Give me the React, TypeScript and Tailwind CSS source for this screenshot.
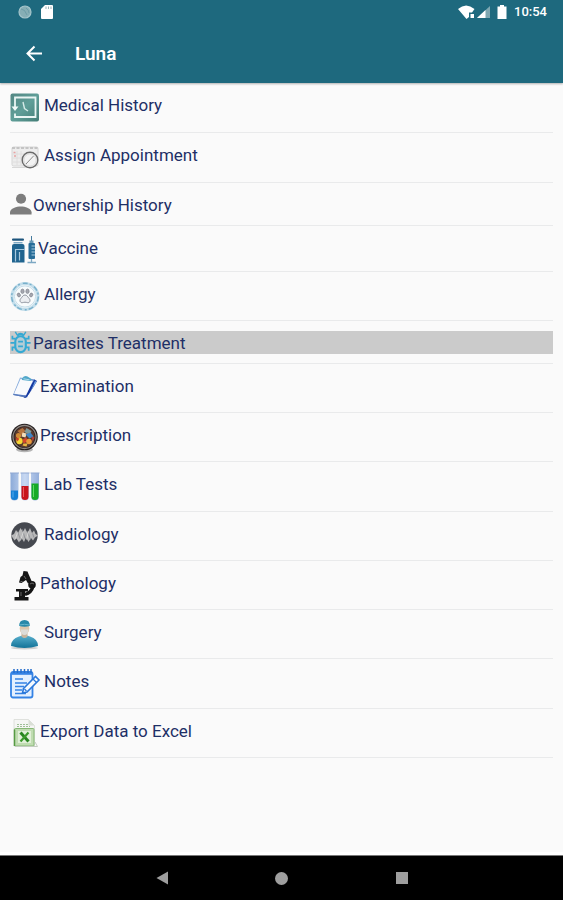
import type { ReactNode } from 'react';
import { clsx } from 'clsx';

function HistoryIcon() {
  return (
    <svg viewBox="0 0 30 30" className="size-[30px]">
      <defs>
        <linearGradient id="history-bg" x1="0" y1="0" x2="1" y2="1">
          <stop offset="0" stopColor="#538783" />
          <stop offset="0.5" stopColor="#5f9e98" />
          <stop offset="1" stopColor="#437d76" />
        </linearGradient>
      </defs>
      <rect x="0.5" y="0.5" width="28.500" height="28" rx="2" fill="url(#history-bg)" />
      <path d="M5 15V4.500h20.500v19.500H5V20.500" fill="none" stroke="#e9f5f3" strokeWidth="1.800" />
      <path d="M1.500 13.500h7L5 18z" fill="#f2faf9" />
      <path d="M13 9l1.500 6.500 3.500 2.500" fill="none" stroke="#d5eae7" strokeWidth="1.400" />
    </svg>
  );
}

function AppointmentIcon() {
  return (
    <svg viewBox="0 0 30 30" className="size-[30px]">
      <rect x="2" y="4" width="26" height="19" rx="1.500" fill="#ededed" stroke="#d6d6d6" />
      <path d="M2 5h26" stroke="#c4c4c4" strokeWidth="2" strokeDasharray="3 1.500" />
      <path d="M3 11h12M3 15h9M3 19h9M7 8v14M11 8v14" stroke="#dcdada" strokeWidth="0.800" />
      <path d="M3.500 9.500h2M4 13h2" stroke="#e8a3a3" strokeWidth="1.400" />
      <circle cx="20" cy="17" r="7.800" fill="#f3f3f3" stroke="#6a6a6a" strokeWidth="1.400" />
      <circle cx="20" cy="17" r="6.200" fill="none" stroke="#cfcfcf" strokeWidth="0.800" />
      <path d="M16 21l7.500-8" stroke="#8c8c8c" strokeWidth="1" />
      <path d="M2 24.500h14" stroke="#d8d8d8" />
    </svg>
  );
}

function PersonIcon() {
  return (
    <svg viewBox="0 0 24 24" className="size-6">
      <circle cx="11.500" cy="5.500" r="5.300" fill="#7d7d7d" />
      <path d="M0 22v-2.500c0-4 7-6 11.300-6s11.200 2 11.200 6V22z" fill="#7d7d7d" />
    </svg>
  );
}

function VaccineIcon() {
  return (
    <svg viewBox="0 0 28 30" className="h-[30px] w-7">
      <rect x="2" y="2.500" width="12" height="2.300" rx="1" fill="#1d557d" />
      <rect x="3.500" y="6" width="9" height="1.500" fill="#7fa9c4" />
      <path d="M2 10q0-2 2-2h8.500q2 0 2 2v16.500H2z" fill="#20648f" />
      <path d="M5 13.500h9.500M5.500 13.500v12M9.500 16v8.500" stroke="#a8c9de" strokeWidth="1.200" fill="none" />
      <path d="M21.500 0v6" stroke="#457b9e" strokeWidth="1" />
      <path d="M19.500 4.500h4v3h-4z" fill="#6999b5" />
      <rect x="18.500" y="7" width="6.500" height="16" rx="1" fill="#286d98" />
      <path d="M21.500 10h3.500M21.500 13h3.500M21.500 16h3.500M21.500 19h3.500" stroke="#b7d6e8" strokeWidth="0.900" />
      <path d="M21.500 23v3.500M17.500 26.500h8.500" stroke="#7da8c3" strokeWidth="1.300" />
    </svg>
  );
}

function AllergyIcon() {
  return (
    <svg viewBox="0 0 32 32" className="size-8">
      <circle cx="15" cy="14.500" r="13" fill="#f8fbfc" stroke="#c3deeb" strokeWidth="3.200" />
      <circle cx="15" cy="14.500" r="13.300" fill="none" stroke="#79b0cb" strokeWidth="1.400" strokeDasharray="5 2 2 3" />
      <circle cx="15" cy="14.500" r="10.600" fill="none" stroke="#a5cadb" strokeWidth="0.600" />
      <g fill="#a5a7af" stroke="#80848e" strokeWidth="0.700">
        <ellipse cx="12.500" cy="9.300" rx="1.600" ry="2.300" />
        <ellipse cx="17.500" cy="9.300" rx="1.600" ry="2.300" />
        <ellipse cx="8.800" cy="13" rx="1.500" ry="2" transform="rotate(-25 8.800 13)" />
        <ellipse cx="21.200" cy="13" rx="1.500" ry="2" transform="rotate(25 21.200 13)" />
      </g>
      <path
        d="M15 13c-2 0-2.700 2-4.200 3.500s-.8 4.500 1.500 4.200c1-.2 1.700-.5 2.700-.5s1.700.3 2.700.5c2.300.3 3-2.700 1.500-4.200S17 13 15 13z"
        fill="#eceef1"
        stroke="#858a95"
        strokeWidth="0.900"
      />
    </svg>
  );
}

function ParasiteIcon() {
  return (
    <svg viewBox="0 0 24 24" className="h-[23px] w-6" fill="none" stroke="#35a9d3">
      <path d="M7.500 4L5.500 1M14.500 4l2-3" strokeWidth="1.500" />
      <path d="M5.500 8H2.500V5M16.500 8h3V5M5 12.500H.500M17 12.500h4.500M5.500 17h-3v3.500M16.500 17h3v3.500" strokeWidth="1.800" />
      <path d="M7.500 5q3.500-4 7 0" strokeWidth="2.200" />
      <rect x="5.500" y="5.500" width="11" height="16.500" rx="5.500" fill="#b4cdd6" strokeWidth="2.200" />
      <path d="M8.500 11h5M8.500 16h5" strokeWidth="1.800" />
    </svg>
  );
}

function ExaminationIcon() {
  return (
    <svg viewBox="0 0 30 30" className="size-[30px]">
      <defs>
        <linearGradient id="exam-board" x1="0" y1="0" x2="1" y2="1">
          <stop offset="0" stopColor="#a9cdec" />
          <stop offset="1" stopColor="#1f4bb0" />
        </linearGradient>
      </defs>
      <path d="M10 3.500l15 2-8 18L3 21z" fill="url(#exam-board)" />
      <path d="M24.500 5.500l2.500 1.500-8 13-3.500 4-2-.5z" fill="#1538a0" />
      <path d="M25 7l1.500.8-6 10z" fill="#6ea0e0" />
      <path d="M10.500 5L23 6.800 16 21.500 4 19.800z" fill="#f8fafd" />
      <path d="M3.500 20.500l12.500 2.500" stroke="#5a79b8" strokeWidth="1" />
      <path d="M12 4.500q2.500-3.500 5.500-2l4 2.500-1 2-8.500-1z" fill="#52a7c9" />
      <path d="M13.500 4.800l6 1" stroke="#b6e3ef" strokeWidth="0.900" />
    </svg>
  );
}

function PrescriptionIcon() {
  return (
    <svg viewBox="0 0 30 30" className="size-[30px]">
      <ellipse cx="14.500" cy="26.500" rx="8.500" ry="2.800" fill="#b5b5b5" />
      <circle cx="14.500" cy="14" r="13.300" fill="#241f1f" />
      <circle cx="14.500" cy="14" r="11.500" fill="none" stroke="#8f8681" strokeWidth="1.300" />
      <circle cx="14.500" cy="14" r="10.300" fill="#5b3a2c" />
      <path d="M7.500 8l5-3 3 3-4 4z" fill="#b8763f" />
      <path d="M16.500 5l5 3-2 4-5-3z" fill="#7f9a9a" />
      <circle cx="8.500" cy="12.500" r="2.600" fill="#d28a35" />
      <circle cx="9.500" cy="18" r="3.200" fill="#f5d736" />
      <path d="M12.500 9.500l4 1-1 4-4-1z" fill="#f4dfba" />
      <path d="M15.500 11.500l5-2 3 4-4 2z" fill="#3f85c5" />
      <path d="M5.500 14.500l4 1-2 3z" fill="#cc3e2b" />
      <path d="M12.500 16.500l4-2 1 4-4 2z" fill="#d6462c" />
      <circle cx="19" cy="18.500" r="2.800" fill="#e89a3a" />
      <path d="M13.500 20.500h4l-1 3-4-1z" fill="#e8b843" />
      <path d="M21.500 13.500l3 1-2 4z" fill="#b3413a" />
    </svg>
  );
}

function LabTestsIcon() {
  return (
    <svg viewBox="0 0 30 30" className="size-[30px]">
      <defs>
        <linearGradient id="tube" x1="0" y1="0" x2="1" y2="0">
          <stop offset="0" stopColor="#8caad8" />
          <stop offset="0.500" stopColor="#c7d8f2" />
          <stop offset="1" stopColor="#93aedb" />
        </linearGradient>
      </defs>
      <path d="M.5 1h8v23.500q0 4-4 4t-4-4zM11 1h8v23.500q0 4-4 4t-4-4zM21 1h8v23.500q0 4-4 4t-4-4z" fill="url(#tube)" />
      <path d="M0 1h9M10.500 1h9M20.500 1h9" stroke="#90a8d2" strokeWidth="1" />
      <path d="M1 18.500h7v6q0 3.500-3.500 3.500T1 24.500z" fill="#167fd4" />
      <path d="M11.500 14h7v10.500q0 3.500-3.500 3.500t-3.500-3.500z" fill="#c8151c" />
      <path d="M21.500 11.500h7v13q0 3.500-3.500 3.500t-3.500-3.500z" fill="#15ab26" />
      <path d="M3 19.500v6" stroke="#55acee" />
      <path d="M13.500 15v10" stroke="#e95a5f" />
      <path d="M23.500 13v12" stroke="#5bd967" />
    </svg>
  );
}

function RadiologyIcon() {
  return (
    <svg viewBox="0 0 30 30" className="size-[30px]">
      <circle cx="14.500" cy="13.500" r="13.200" fill="#464950" />
      <path
        d="M1 13.500l3-1.500 2-4 2 3 2.500-5 2.500 4 2-4 2.500 5 2.500-5 2 5 2-2.500 1.500 3.500 2.500 1.500-3 2-2 3-2-2.500-2.500 4-2.500-4.500-2 4.500-2.500-4-2.500 4.500-2.500-4-2 2-2-3z"
        fill="#b8b8b9"
      />
      <path d="M7.500 9.500l3 8M12.500 7.500l2.500 9M17.500 9.500l3 8M22.500 11.500l1.500 4" stroke="#8f9195" strokeWidth="0.900" />
      <path d="M5.500 16.500l2-6M10.500 18.500l3-9M16.500 17.500l2-8" stroke="#dedede" strokeWidth="0.800" />
    </svg>
  );
}

function PathologyIcon() {
  return (
    <svg viewBox="0 0 30 30" className="size-[30px]">
      <g fill="#151515">
        <path d="M13.500 0l4 .5 1 2.500 3.500 8-4 1.500-2-3.500-4.500 3-2.500-.5L10.500 6l2-1.500z" />
        <circle cx="22" cy="13.800" r="3.800" />
        <path d="M6 18h12v2.500h-3v6H9v-6H6z" />
        <path d="M4.500 26h14v3.500h-14z" />
      </g>
      <path d="M23 15.500q-1.500 6-8 8" fill="none" stroke="#151515" strokeWidth="3.200" />
      <path d="M14 5l2 3M10.500 10.500h2M20 13q2-2 4 0M11 21v4" stroke="#737373" strokeWidth="0.900" fill="none" />
    </svg>
  );
}

function SurgeryIcon() {
  return (
    <svg viewBox="0 0 30 30" className="size-[30px]">
      <defs>
        <linearGradient id="scrubs" x1="0" y1="0" x2="0" y2="1">
          <stop offset="0" stopColor="#58afcd" />
          <stop offset="1" stopColor="#137398" />
        </linearGradient>
      </defs>
      <ellipse cx="14.500" cy="28" rx="13.500" ry="1.500" fill="#cfcfcf" />
      <path d="M1 26q0-7 8-9.500l3-1h5l3 1q8 2.500 8 9.500-13.500 4-27 0z" fill="url(#scrubs)" />
      <path d="M11.500 12h6v4.500q-3 3-6 0z" fill="#c8b49c" />
      <ellipse cx="14.500" cy="8.500" rx="4.800" ry="6" fill="#dec8ad" />
      <path d="M10.500 9.500h8q-.5 5.500-4 5.500t-4-5.500z" fill="#dcdcd8" />
      <path d="M9.200 6Q9 0 14.500 0t5.300 6q-5 1.500-10.600 0z" fill="#2989a9" />
      <path d="M9.500 5q5-1.500 10 0" stroke="#66b7cd" fill="none" />
    </svg>
  );
}

function NotesIcon() {
  return (
    <svg viewBox="0 0 32 30" className="h-[30px] w-8" fill="none">
      <rect x="1" y="3" width="21.500" height="25.500" rx="2" fill="#e4f0ff" stroke="#3583e5" strokeWidth="1.800" />
      <path d="M1.500 4.500h20.500" stroke="#3583e5" strokeWidth="2.600" />
      <path d="M4 0v4M7.500 0v4M11 0v4M14.500 0v4M18 0v4M21 0v4" stroke="#256dcc" strokeWidth="1.500" />
      <path d="M5 10h8M5 14h12M5 17.500h9M5 21h7M5 24.500h11" stroke="#3583e5" strokeWidth="1.700" />
      <path d="M13.500 19.500L25.500 7.500l3.500 3.500L17 23l-4.500 1z" fill="#f5faff" stroke="#2b78da" strokeWidth="1.600" />
      <path d="M23 10l3.500 3.500M14.500 20l2 2" stroke="#2b78da" strokeWidth="1.300" />
    </svg>
  );
}

function ExcelIcon() {
  return (
    <svg viewBox="0 0 30 30" className="size-[30px]">
      <path d="M4 .5h14.500l6 6V27H4z" fill="#f5f6f4" stroke="#d8dbd5" strokeWidth="0.800" />
      <path d="M18.500.5v6h6z" fill="#dadfd6" />
      <path d="M7 5.500h11M7 7.500h13" stroke="#9fbf97" strokeWidth="1" strokeDasharray="2 1" />
      <rect x="4.500" y="9.500" width="19.500" height="17.500" rx="1" fill="#c0dcb1" stroke="#86b875" />
      <rect x="8" y="12" width="13" height="12" fill="#e1efd8" />
      <path d="M4.500 27V10.500" stroke="#569b43" strokeWidth="1.500" />
      <path d="M10.500 13.500l8 9" stroke="#28851f" strokeWidth="3" />
      <path d="M18.500 13.500l-8 9" stroke="#3c9a2b" strokeWidth="2.200" />
      <path d="M25 23l2.500 4.500H5" stroke="#c4ccc0" fill="none" />
    </svg>
  );
}

type MenuItem = {
  label: string;
  icon: ReactNode;
  row: string;
  slot: string;
  selected?: boolean;
};

const menuItems: MenuItem[] = [
  { label: 'Medical History', icon: <HistoryIcon />, row: 'h-[50px]', slot: 'w-[34px]' },
  { label: 'Assign Appointment', icon: <AppointmentIcon />, row: 'h-[50px]', slot: 'w-[34px]' },
  { label: 'Ownership History', icon: <PersonIcon />, row: 'h-[43px]', slot: 'w-[23px]' },
  { label: 'Vaccine', icon: <VaccineIcon />, row: 'h-[46px]', slot: 'w-7' },
  { label: 'Allergy', icon: <AllergyIcon />, row: 'h-[49px]', slot: 'w-[34px]' },
  { label: 'Parasites Treatment', icon: <ParasiteIcon />, row: 'h-[43px]', slot: 'w-[23px]', selected: true },
  { label: 'Examination', icon: <ExaminationIcon />, row: 'h-[49px]', slot: 'w-[30px]' },
  { label: 'Prescription', icon: <PrescriptionIcon />, row: 'h-[49px]', slot: 'w-[30px]' },
  { label: 'Lab Tests', icon: <LabTestsIcon />, row: 'h-[50px]', slot: 'w-[34px]' },
  { label: 'Radiology', icon: <RadiologyIcon />, row: 'h-[49px]', slot: 'w-[34px]' },
  { label: 'Pathology', icon: <PathologyIcon />, row: 'h-[49px]', slot: 'w-[30px]' },
  { label: 'Surgery', icon: <SurgeryIcon />, row: 'h-[49px]', slot: 'w-[34px]' },
  { label: 'Notes', icon: <NotesIcon />, row: 'h-[50px]', slot: 'w-[34px]' },
  { label: 'Export Data to Excel', icon: <ExcelIcon />, row: 'h-[49px]', slot: 'w-[30px]' },
];

function StatusBar() {
  return (
    <div className="flex h-6 items-center justify-between pr-4 pl-[18px]">
      <div className="flex items-center gap-2">
        <svg viewBox="0 0 14 14" className="size-[14px]">
          <circle cx="7" cy="7" r="6" fill="#86aeb5" stroke="#a5c5cb" strokeWidth="1.200" />
          <path d="M3 4q4 0 6 6M8 3q3 2 3 5" stroke="#6d9da7" fill="none" />
        </svg>
        <svg viewBox="0 0 14 14" className="size-[14px]">
          <path d="M5 0h7q1 0 1 1v12q0 1-1 1H2q-1 0-1-1V4z" fill="#fff" />
          <path d="M6 1.500v2.500M8.500 1.500v2.500M11 1.500v2.500" stroke="#9bb3b8" strokeWidth="1" />
        </svg>
      </div>
      <div className="flex items-center gap-[7px]">
        <div className="flex items-center gap-[2px]">
          <svg viewBox="0 0 17 14" className="h-[14px] w-[17px]">
            <path d="M0 4q8-7 16.500 0L14 7.500h-3V12l-2.500 2z" fill="#fff" />
            <path d="M12.500 9h3.500v4h-3.500z" fill="#fff" />
          </svg>
          <svg viewBox="0 0 13 14" className="h-[14px] w-[13px]">
            <path d="M13 1v12H0z" fill="#7fa8b2" />
            <path d="M8.500 5v8H0z" fill="#fff" />
          </svg>
        </div>
        <svg viewBox="0 0 10 14" className="h-[14px] w-[10px]">
          <path d="M3 0h4v1.500h2.500V14H.5V1.500H3z" fill="#fff" />
        </svg>
        <span className="text-[13px] leading-6 font-medium">10:54</span>
      </div>
    </div>
  );
}

function MenuRow({ item }: { item: MenuItem }) {
  return (
    <li className={clsx('border-b border-[#e9eaeb]', item.row)}>
      <button type="button" className="flex size-full cursor-pointer items-start pt-[10px] text-left">
        <span className={clsx('flex h-[23px] flex-1 items-start', item.selected && 'bg-[#cbcbcb]')}>
          <span className={clsx('flex shrink-0', item.slot)}>{item.icon}</span>
          <span className="text-[17px] leading-6">{item.label}</span>
        </span>
      </button>
    </li>
  );
}

export default function App() {
  return (
    <div className="flex min-h-screen flex-col bg-[#fafafa] font-['Roboto',sans-serif] text-[#1e2f66]">
      <header className="h-[83px] bg-[#1e697e] text-white shadow-[0_1px_2px_rgba(0,0,0,0.3)]">
        <StatusBar />
        <div className="flex h-[60px] items-center gap-[30px] pl-[25px]">
          <button type="button" aria-label="Back" className="cursor-pointer">
            <svg viewBox="0 0 20 20" className="size-5" fill="none" stroke="#fff" strokeWidth="2">
              <path d="M17 9.500H3M9.500 2.500l-7 7 7 7" />
            </svg>
          </button>
          <h1 className="text-[19px] leading-6 font-semibold">Luna</h1>
        </div>
      </header>

      <main className="flex-1 border-b-[3px] border-white px-[10px]">
        <ul>
          {menuItems.map((item) => (
            <MenuRow key={item.label} item={item} />
          ))}
        </ul>
      </main>

      <nav className="flex h-[45px] justify-center border-t border-[#777] bg-black">
        <button type="button" aria-label="Back" className="flex w-[120px] cursor-pointer items-center justify-center">
          <svg viewBox="0 0 14 14" className="size-[14px]">
            <path d="M13 0.500v13L1.500 7z" fill="#9e9e9e" />
          </svg>
        </button>
        <button type="button" aria-label="Home" className="flex w-[120px] cursor-pointer items-center justify-center">
          <span className="size-[13px] rounded-full bg-[#9e9e9e]" />
        </button>
        <button type="button" aria-label="Recent apps" className="flex w-[120px] cursor-pointer items-center justify-center">
          <span className="size-3 bg-[#9e9e9e]" />
        </button>
      </nav>
    </div>
  );
}
